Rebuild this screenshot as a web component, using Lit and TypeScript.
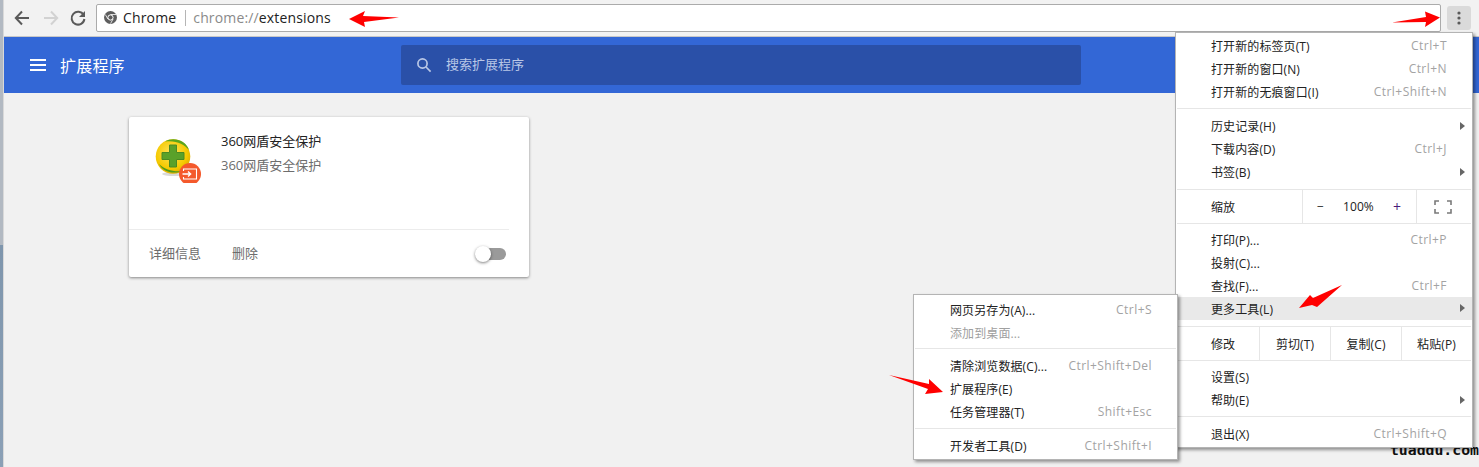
import { LitElement, html, css, svg } from "lit";
import { customElement } from "lit/decorators.js";

type Row = { label: string; key?: string; arrow?: boolean; hot?: boolean; off?: boolean; low?: boolean };

const rowTpl = (r: Row) => html`<div class="row ${r.hot ? "hot" : ""} ${r.off ? "off" : ""} ${r.low ? "low" : ""}">
  <span>${r.label}</span>
  ${r.key ? html`<span class="key">${r.key}</span>` : ""}
  ${r.arrow ? html`<span class="tri"></span>` : ""}
</div>`;

@customElement("app-root")
export class AppRoot extends LitElement {
  static styles = css`
    :host {
      display: block;
      position: relative;
      width: 1479px;
      height: 467px;
      overflow: hidden;
      background: #f1f1f1;
      font-family: "Open Sans", "Noto Sans CJK SC", sans-serif;
      font-size: 12px;
      color: #222;
    }
    .toolbar {
      height: 37px;
      box-sizing: border-box;
      display: flex;
      align-items: center;
      padding: 0 8px 1px 13px;
      background: #f2f2f2;
      border-bottom: 1px solid #c8c8c8;
    }
    .nav { width: 29px; display: flex; flex: none; }
    .nav.mid { width: 27px; }
    .nav.last { width: 27px; }
    .omni {
      flex: 1;
      height: 28px;
      box-sizing: border-box;
      border: 1px solid #ababab;
      border-radius: 2px;
      background: #fff;
      display: flex;
      align-items: center;
      padding-left: 7px;
      font-size: 14px;
      letter-spacing: 0.15px;
      white-space: nowrap;
    }
    .globe { margin-right: 6px; flex: none; }
    .chrome-label { color: #222; }
    .omni-sep { width: 1px; height: 16px; background: #b5b5b5; margin: 0 7px 0 9px; }
    .scheme { color: #8a8a8a; }
    .dots {
      width: 24px;
      height: 24px;
      margin-left: 6px;
      flex: none;
      border-radius: 3px;
      background: #dadada;
      display: flex;
      align-items: center;
      justify-content: center;
    }
    .page { padding-left: 4px; display: flex; flex-direction: column; }
    .edge {
      position: absolute;
      left: 0;
      top: 0;
      bottom: 0;
      width: 3px;
      border-right: 1px solid #d9d9d9;
      background: linear-gradient(to bottom, #b2b9c2 0, #b2b9c2 245px, #7f96ad 245px, #8ba0b6 100%);
    }
    .header {
      height: 56px;
      background: #3367d6;
      display: flex;
      align-items: center;
      color: #fff;
      padding-left: 26px;
    }
    .burger { flex: none; margin-right: 14px; }
    .title { font-size: 16px; letter-spacing: 0.2px; width: 341px; flex: none; }
    .search {
      width: 680px;
      height: 40px;
      background: #2a50a8;
      border-radius: 2px;
      display: flex;
      align-items: center;
      padding-left: 14px;
      box-sizing: border-box;
      color: #b9c7e6;
      font-size: 13px;
    }
    .search svg { margin-right: 13px; }
    .search span { margin-bottom: 3px; }
    .body { padding: 24px 0 0 125px; }
    .card {
      width: 400px;
      height: 160px;
      background: #fff;
      border-radius: 2px;
      box-shadow: 0 1px 3px rgba(0, 0, 0, 0.45);
      display: flex;
      flex-direction: column;
    }
    .card-top {
      height: 113px;
      box-sizing: border-box;
      padding: 15px 0 0 24px;
      display: flex;
      border-bottom: 1px solid #ececec;
      margin-right: 20px;
    }
    .ico { flex: none; margin: 1px 20px 0 0; }
    .name { font-size: 13px; line-height: 18px; color: #222; }
    .desc { font-size: 13px; line-height: 18px; margin-top: 6px; color: #6d6d6d; }
    .card-foot {
      flex: 1;
      display: flex;
      align-items: center;
      padding: 0 23px 0 20px;
      font-size: 13px;
      color: #6d6d6d;
    }
    .card-foot span { margin-bottom: 2px; }
    .card-foot span + span { margin-left: 31px; }
    .switch {
      margin-left: auto;
      width: 31px;
      height: 16px;
      position: relative;
      display: flex;
      align-items: center;
      justify-content: flex-end;
    }
    .track { width: 29px; height: 12px; border-radius: 6px; background: #9a9a9a; }
    .knob {
      position: absolute;
      left: 0;
      top: 0;
      width: 16px;
      height: 16px;
      border-radius: 50%;
      background: #fff;
      box-shadow: 0 1px 3px rgba(0, 0, 0, 0.5);
    }
    .menu {
      position: absolute;
      box-sizing: border-box;
      background: #fff;
      border: 1px solid #b4b4b4;
      box-shadow: 2px 2px 3px rgba(0, 0, 0, 0.4);
      display: flex;
      flex-direction: column;
      white-space: nowrap;
      letter-spacing: 0.1px;
    }
    .main { left: 1175px; top: 32px; width: 298px; height: 416px; padding-top: 2px; }
    .sub { left: 913px; top: 294px; width: 265px; height: 166px; padding-top: 4px; }
    .row {
      height: 23px;
      flex: none;
      box-sizing: border-box;
      display: flex;
      align-items: center;
      padding: 0 25px 2px 35px;
      position: relative;
    }
    .row.low { padding-bottom: 0; }
    .sub .row { padding-left: 36px; }
    .row.hot { background: #e9e9e9; }
    .row.off { color: #a0a0a0; }
    .key { margin-left: auto; color: #a3a3a3; letter-spacing: 0.45px; }
    .tri {
      position: absolute;
      right: 7px;
      top: 7px;
      border-left: 5px solid #666;
      border-top: 4px solid transparent;
      border-bottom: 4px solid transparent;
    }
    .sep { flex: none; display: flex; flex-direction: column; padding: 0 1px; box-sizing: border-box; }
    .sep i { display: block; height: 1px; background: #e6e6e6; }
    .strip {
      flex: none;
      display: flex;
      border-top: 1px solid #e6e6e6;
      border-bottom: 1px solid #e6e6e6;
      margin: 0 1px;
      box-sizing: border-box;
    }
    .strip > div {
      display: flex;
      align-items: center;
      justify-content: center;
      border-left: 1px solid #e6e6e6;
      box-sizing: border-box;
    }
    .strip > div:first-child { justify-content: flex-start; padding-left: 34px; border-left: 0; }
    .zoom-mid { justify-content: space-between !important; padding: 0 15px 0 14px; color: #222; }
    .plus { color: #4a1a7a; font-size: 14px; }
    .fs { margin-right: 2px; }
    .arrows { position: absolute; left: 0; top: 0; pointer-events: none; }
    .mark {
      position: absolute;
      right: 0;
      top: 444px;
      font-family: "DejaVu Sans Mono", monospace;
      font-weight: 700;
      font-size: 14.8px;
      line-height: 11px;
      color: #111;
    }
  `;

  render() {
    return html`
      <div class="page">
        <div class="toolbar" style="margin-left:-4px">
          <span class="nav">
            <svg width="18" height="18" viewBox="0 0 18 18" fill="none" stroke="#5a5a5a" stroke-width="2"><path d="M16 9H3M9 2.500 2.800 9 9 15.500"/></svg>
          </span>
          <span class="nav mid">
            <svg width="18" height="18" viewBox="0 0 18 18" fill="none" stroke="#d2d2d2" stroke-width="2"><path d="M2 9h13M9 2.500 15.200 9 9 15.500"/></svg>
          </span>
          <span class="nav last">
            <svg width="18" height="18" viewBox="0 0 18 18" fill="none"><path d="M14.600 6A6.400 6.400 0 1 0 15.400 10" stroke="#5a5a5a" stroke-width="2"/><path d="M16 2v6h-6z" fill="#5a5a5a"/></svg>
          </span>
          <div class="omni">
            <svg class="globe" width="13" height="13" viewBox="0 0 13 13">
              <circle cx="6.500" cy="6.500" r="6.500" fill="#5e5e5e"/>
              <circle cx="6.500" cy="6.500" r="2.600" fill="#5e5e5e" stroke="#fff" stroke-width="1"/>
              <path d="M6.500 3.500h5.600M3.900 8 1.300 3.500M9.100 8 6.500 12.600" stroke="#fff" stroke-width=".8"/>
            </svg>
            <span class="chrome-label">Chrome</span><span class="omni-sep"></span><span class="scheme">chrome://</span><span>extensions</span>
          </div>
          <div class="dots">
            <svg width="4" height="14" viewBox="0 0 4 14" fill="#5a5a5a"><circle cx="2" cy="2" r="1.600"/><circle cx="2" cy="7" r="1.600"/><circle cx="2" cy="12" r="1.600"/></svg>
          </div>
        </div>
        <div class="header">
          <svg class="burger" width="16" height="12" viewBox="0 0 16 12" fill="#fff"><rect width="16" height="2"/><rect y="5" width="16" height="2"/><rect y="10" width="16" height="2"/></svg>
          <div class="title">扩展程序</div>
          <div class="search">
            <svg width="18" height="18" viewBox="0 0 18 18" fill="none" stroke="#b9c7e6" stroke-width="1.700"><circle cx="7.500" cy="7.500" r="4.600"/><path d="m11 11 4.600 4.600"/></svg>
            <span>搜索扩展程序</span>
          </div>
        </div>
        <div class="body">
          <div class="card">
            <div class="card-top">
              <svg class="ico" width="48" height="50" viewBox="0 0 48 50">
                <defs>
                  <radialGradient id="ball" cx=".45" cy=".4" r=".65">
                    <stop offset="0" stop-color="#ffe45c"/><stop offset=".7" stop-color="#f5c900"/><stop offset="1" stop-color="#d9a800"/>
                  </radialGradient>
                </defs>
                <ellipse cx="21" cy="41" rx="12" ry="2" fill="#000" opacity=".15"/>
                <circle cx="20" cy="23.500" r="17.300" fill="url(#ball)"/>
                <path d="M12 8.500C20 3.500 33 7 36 17c-5-6-13-10-24-8.500z" fill="#5aa51f"/>
                <path d="M6 31c3 7 14 11 23 7-8 1-17-1-23-7z" fill="#4f9a1c"/>
                <path d="M16.500 12h7v7.500H31v7h-7.500V34h-7v-7.500H9v-7h7.500z" fill="#5aa12a" stroke="#4a8a22" stroke-width="1" stroke-linejoin="round"/>
                <circle cx="37" cy="41" r="11" fill="#f4592c"/>
                <path d="M30.500 38V36h13v10h-13v-2" fill="none" stroke="#fff" stroke-width="1.100"/>
                <path d="M29.500 41h8M35 38.500l2.700 2.500-2.700 2.500" fill="none" stroke="#fff" stroke-width="1.300"/>
              </svg>
              <div>
                <div class="name">360网盾安全保护</div>
                <div class="desc">360网盾安全保护</div>
              </div>
            </div>
            <div class="card-foot">
              <span>详细信息</span><span>删除</span>
              <div class="switch"><div class="track"></div><div class="knob"></div></div>
            </div>
          </div>
        </div>
      </div>

      <div class="mark">tuaddu.com</div>

      <div class="menu main">
        ${[
          { label: "打开新的标签页(T)", key: "Ctrl+T" },
          { label: "打开新的窗口(N)", key: "Ctrl+N" },
          { label: "打开新的无痕窗口(I)", key: "Ctrl+Shift+N" },
        ].map(rowTpl)}
        <div class="sep" style="height:11px;padding-top:4px"><i></i></div>
        ${[
          { label: "历史记录(H)", arrow: true },
          { label: "下载内容(D)", key: "Ctrl+J" },
          { label: "书签(B)", arrow: true },
        ].map(rowTpl)}
        <div class="strip" style="height:35px;margin-top:5px">
          <div style="width:125px">缩放</div>
          <div class="zoom-mid" style="width:114px"><span>−</span><span>100%</span><span class="plus">+</span></div>
          <div style="flex:1">
            <svg class="fs" width="18" height="14" viewBox="0 0 18 14" fill="none" stroke="#7a7a7a" stroke-width="1.600"><path d="M1 5V1h4M13 1h4v4M17 9v4h-4M5 13H1V9"/></svg>
          </div>
        </div>
        <div style="height:4px;flex:none"></div>
        ${[
          { label: "打印(P)...", key: "Ctrl+P", low: true },
          { label: "投射(C)...", low: true },
          { label: "查找(F)...", key: "Ctrl+F", low: true },
          { label: "更多工具(L)", arrow: true, hot: true, low: true },
        ].map(rowTpl)}
        <div class="strip" style="height:35px;margin-top:6px">
          <div style="width:82px">修改</div>
          <div style="width:71px">剪切(T)</div>
          <div style="width:71px">复制(C)</div>
          <div style="flex:1">粘贴(P)</div>
        </div>
        <div style="height:5px;flex:none"></div>
        ${[{ label: "设置(S)" }, { label: "帮助(E)", arrow: true }].map(rowTpl)}
        <div class="sep" style="height:11px;padding-top:4px"><i></i></div>
        ${[{ label: "退出(X)", key: "Ctrl+Shift+Q" }].map(rowTpl)}
      </div>

      <div class="menu sub">
        ${[
          { label: "网页另存为(A)...", key: "Ctrl+S" },
          { label: "添加到桌面...", off: true },
        ].map(rowTpl)}
        <div class="sep" style="height:10px;padding-top:3px"><i></i></div>
        ${[
          { label: "清除浏览数据(C)...", key: "Ctrl+Shift+Del" },
          { label: "扩展程序(E)" },
          { label: "任务管理器(T)", key: "Shift+Esc" },
        ].map(rowTpl)}
        <div class="sep" style="height:11px;padding-top:4px"><i></i></div>
        ${[{ label: "开发者工具(D)", key: "Ctrl+Shift+I" }].map(rowTpl)}
      </div>

      <svg class="arrows" width="1479" height="467" fill="#f00">
        ${svg`<polygon points="349,19 365,11 363,16 399,17.500 364,22 365,27"/>
        <polygon points="1392,22.500 1426,17 1425,11.500 1440,17.500 1425,27 1426,22"/>
        <polygon points="1299,308 1310,295 1313,298 1342,285 1317,307 1312,305"/>
        <polygon points="889,375 929,384 929,379 943,392 925,394 928,389"/>`}
      </svg>
      <div class="edge"></div>
    `;
  }
}
